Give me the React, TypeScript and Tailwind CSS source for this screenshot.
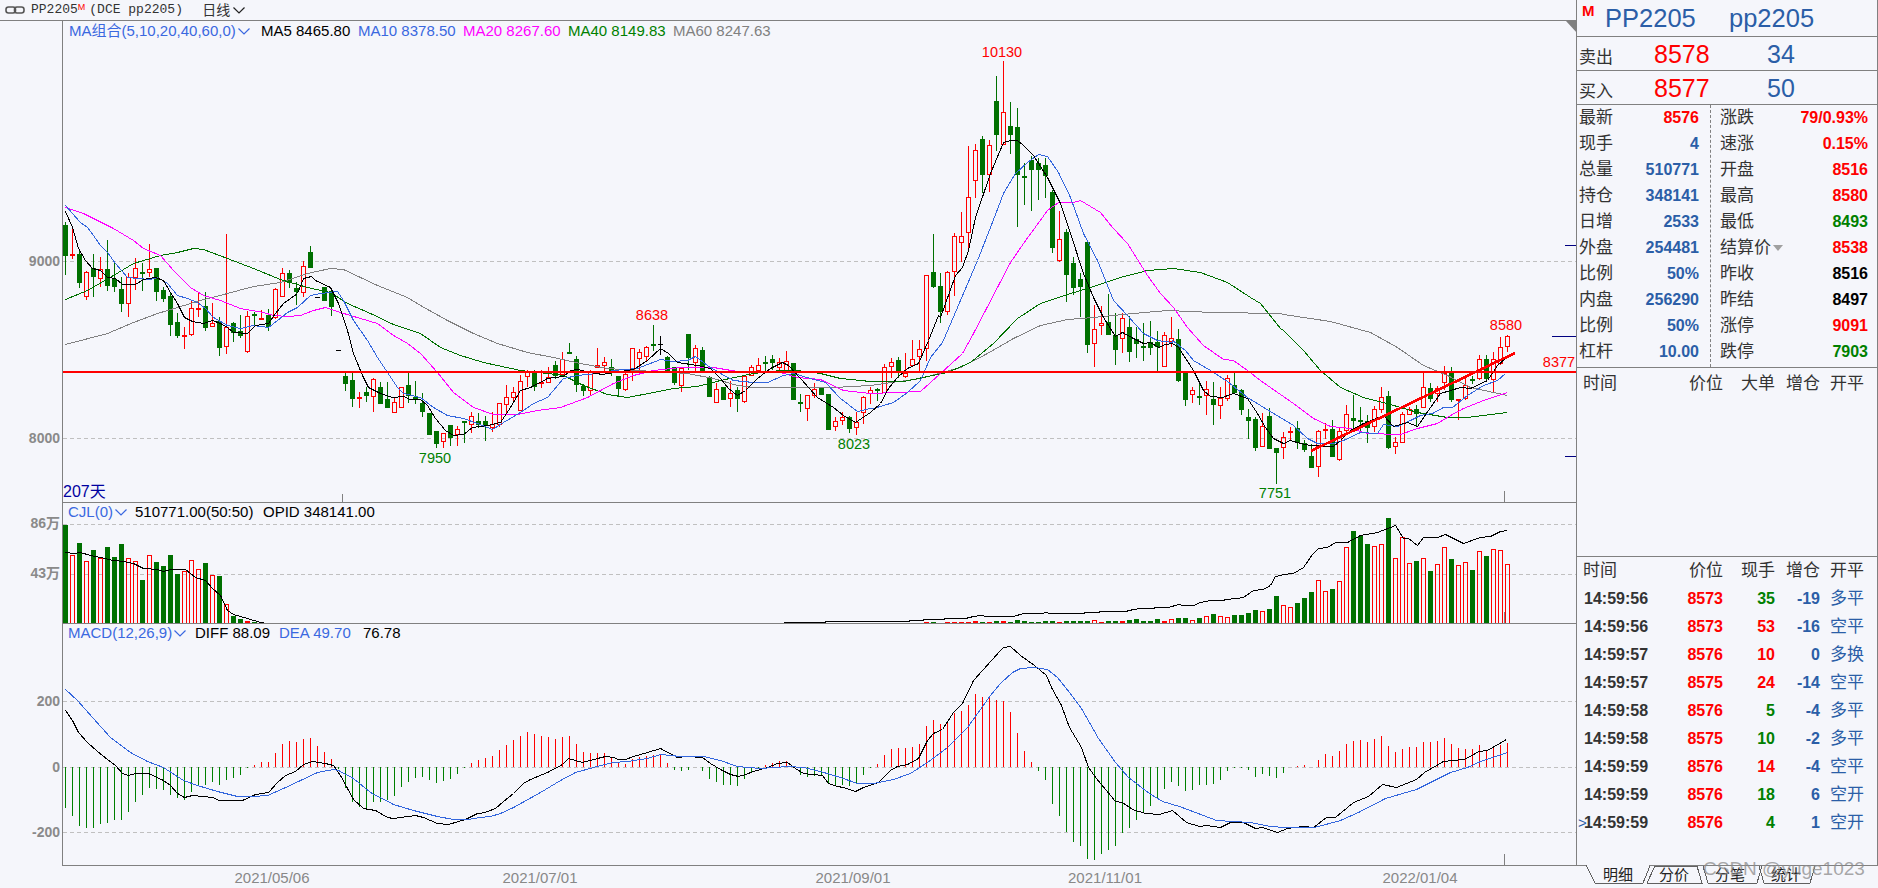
import React from 'react';

type Kind = 'r' | 'g' | 'k';
type Row = [Kind, number, number, number, number];
type Candle = { k: Kind; wt: number; bt: number; bb: number; wb: number };

const RED = '#ff0000';
const GREEN = '#007000';
const BLUE = '#3a68e0';
const GRID = '#c0c0c0';

// values below are read at 3x, so every list carries its own origin
const seg = (base: number, rows: Row[]): Candle[] =>
  rows.map(([k, a, b, c, d]) => ({
    k,
    wt: Math.round(base + a / 3),
    bt: Math.round(base + b / 3),
    bb: Math.round(base + c / 3),
    wb: Math.round(base + d / 3),
  }));

const candles: Candle[] = [
  ...seg(180, [
    ['g', 125, 135, 227, 285], ['r', 140, 222, 228, 237], ['g', 210, 222, 308, 325], ['r', 272, 277, 350, 360],
    ['g', 222, 265, 290, 350], ['r', 232, 268, 298, 322], ['g', 180, 267, 317, 332], ['g', 245, 296, 320, 335],
    ['g', 290, 327, 373, 395], ['r', 278, 292, 373, 410], ['r', 235, 265, 295, 330], ['g', 250, 276, 281, 332],
    ['r', 192, 268, 278, 290], ['g', 265, 265, 337, 362], ['g', 320, 330, 356, 365], ['g', 340, 348, 434, 467],
    ['g', 400, 427, 467, 475], ['r', 440, 466, 470, 506], ['r', 362, 385, 466, 467], ['r', 336, 385, 388, 410],
    ['g', 335, 378, 443, 452], ['r', 370, 430, 442, 442], ['g', 412, 424, 503, 527], ['r', 162, 442, 502, 522],
    ['g', 425, 430, 458, 485], ['g', 405, 453, 467, 473], ['r', 393, 409, 517, 518], ['g', 397, 402, 407, 440],
    ['r', 390, 415, 419, 420], ['g', 388, 404, 440, 452], ['r', 325, 328, 415, 418], ['r', 265, 280, 350, 350],
    ['g', 270, 280, 308, 325], ['g', 306, 325, 335, 375], ['r', 243, 259, 338, 350], ['g', 197, 216, 264, 264],
    ['k', 352, 352, 352, 352], ['g', 322, 322, 362, 362], ['g', 330, 333, 382, 408], ['k', 511, 511, 511, 511],
    ['g', 578, 588, 611, 632], ['g', 575, 600, 656, 680], ['r', 636, 650, 658, 683], ['g', 620, 636, 648, 665],
    ['r', 595, 598, 650, 695], ['g', 605, 621, 672, 672], ['g', 605, 657, 684, 684], ['r', 650, 667, 700, 700],
    ['r', 620, 622, 683, 683], ['g', 578, 615, 647, 670], ['g', 603, 650, 655, 672],
  ]),
  ...seg(290, [
    ['g', 310, 340, 365, 380], ['g', 368, 368, 435, 435], ['g', 423, 423, 462, 473], ['r', 428, 428, 455, 473],
    ['g', 405, 405, 445, 467], ['r', 408, 418, 435, 467], ['g', 392, 393, 400, 458], ['r', 365, 379, 406, 428],
    ['g', 370, 393, 406, 415], ['g', 378, 393, 407, 452], ['r', 365, 403, 415, 425], ['r', 338, 340, 405, 412],
    ['r', 285, 322, 346, 370], ['r', 290, 307, 325, 340], ['r', 255, 272, 362, 362], ['r', 240, 245, 260, 290],
    ['g', 240, 248, 290, 302], ['r', 240, 275, 280, 295], ['r', 232, 262, 278, 278], ['g', 213, 226, 258, 268],
    ['r', 187, 208, 255, 260], ['g', 160, 187, 191, 192], ['g', 198, 208, 285, 305], ['g', 282, 288, 302, 318],
    ['r', 240, 242, 302, 318], ['r', 175, 225, 233, 235], ['r', 202, 217, 227, 250], ['g', 208, 230, 245, 258],
    ['g', 258, 258, 296, 318], ['r', 240, 253, 300, 302], ['r', 175, 175, 245, 272], ['r', 178, 187, 208, 248],
    ['r', 168, 172, 202, 215], ['g', 105, 162, 167, 182], ['k', 138, 163, 163, 195], ['g', 198, 202, 250, 250],
    ['g', 232, 232, 278, 285], ['r', 235, 235, 288, 305], ['g', 133, 133, 205, 240], ['r', 165, 175, 220, 245],
    ['g', 170, 180, 250, 250], ['g', 258, 260, 320, 322], ['r', 278, 298, 338, 338], ['g', 290, 292, 330, 330],
    ['r', 272, 310, 328, 350], ['g', 290, 300, 326, 365], ['r', 256, 257, 335, 340], ['r', 225, 232, 257, 258],
    ['r', 205, 224, 242, 245], ['g', 198, 216, 220, 250], ['g', 195, 207, 218, 240], ['r', 203, 215, 233, 240],
    ['r', 183, 212, 250, 250], ['g', 220, 220, 330, 330], ['g', 312, 337, 341, 365], ['r', 315, 316, 358, 392],
    ['r', 278, 298, 317, 325], ['g', 292, 292, 315, 315], ['g', 312, 312, 420, 420], ['r', 382, 394, 411, 422],
    ['r', 365, 382, 393, 405], ['g', 378, 380, 417, 430], ['r', 367, 397, 415, 435], ['r', 318, 322, 368, 402],
    ['r', 290, 300, 313, 342], ['g', 295, 297, 303, 333], ['r', 222, 232, 310, 310], ['r', 205, 217, 230, 265],
    ['g', 202, 210, 250, 265], ['r', 190, 248, 260, 265], ['r', 150, 208, 229, 232], ['r', 150, 178, 200, 243],
  ]),
  ...seg(30, [
    ['r', 735, 736, 958, 993], ['g', 612, 727, 770, 775], ['g', 730, 768, 845, 878], ['r', 722, 727, 845, 855],
    ['r', 610, 619, 727, 798], ['r', 545, 619, 640, 695], ['r', 348, 502, 610, 655], ['r', 342, 361, 454, 503],
    ['g', 318, 327, 434, 490], ['r', 330, 346, 434, 485], ['g', 138, 213, 314, 362], ['r', 93, 247, 344, 345],
    ['g', 216, 288, 314, 372], ['g', 234, 291, 434, 590], ['g', 400, 438, 443, 525], ['g', 378, 390, 419, 542],
    ['g', 385, 400, 419, 510], ['g', 385, 405, 437, 505], ['g', 480, 486, 653, 668], ['r', 543, 628, 694, 695],
    ['g', 598, 606, 734, 815], ['g', 680, 699, 773, 795], ['g', 730, 747, 771, 860], ['g', 636, 636, 944, 968],
    ['r', 826, 898, 943, 1011], ['r', 828, 880, 889, 915], ['g', 792, 876, 914, 914],
  ]),
  ...seg(290, [
    ['g', 70, 135, 180, 225], ['r', 68, 85, 148, 188], ['g', 78, 110, 185, 215], ['g', 110, 147, 162, 205],
    ['g', 98, 168, 172, 212], ['g', 92, 155, 173, 195], ['g', 122, 155, 172, 250], ['r', 125, 136, 230, 230],
    ['r', 80, 143, 156, 172], ['g', 118, 147, 272, 275], ['g', 248, 248, 329, 348], ['r', 290, 301, 314, 340],
    ['g', 272, 319, 323, 345], ['r', 272, 296, 317, 375], ['g', 275, 327, 345, 405], ['r', 292, 325, 349, 387],
    ['r', 255, 265, 326, 332], ['g', 245, 285, 310, 310], ['g', 298, 300, 360, 375], ['g', 357, 382, 392, 447],
    ['g', 380, 388, 473, 482], ['r', 368, 408, 472, 472], ['g', 353, 378, 476, 476],
  ]),
  ...seg(300, [
    ['g', 445, 445, 460, 552], ['r', 395, 412, 445, 477], ['r', 382, 394, 399, 420], ['g', 363, 385, 428, 448],
    ['g', 420, 430, 450, 455], ['g', 432, 468, 503, 505], ['r', 390, 394, 502, 530], ['r', 368, 388, 394, 416],
    ['g', 360, 388, 470, 470], ['r', 380, 394, 481, 482], ['r', 316, 343, 393, 400], ['g', 285, 354, 362, 390],
    ['g', 320, 360, 366, 395], ['g', 345, 363, 383, 428], ['r', 318, 328, 382, 395], ['r', 262, 292, 329, 340],
    ['g', 272, 288, 443, 448], ['r', 412, 427, 442, 462], ['r', 335, 343, 428, 430], ['r', 320, 328, 344, 345],
    ['g', 315, 327, 342, 380], ['r', 218, 262, 323, 325], ['g', 250, 264, 296, 305], ['r', 258, 265, 283, 305],
    ['r', 198, 218, 250, 270], ['g', 200, 217, 300, 305], ['r', 298, 298, 303, 360], ['r', 225, 255, 296, 300],
    ['g', 228, 237, 242, 252], ['r', 165, 178, 238, 240], ['g', 165, 178, 237, 240], ['r', 157, 178, 241, 278],
    ['r', 112, 142, 192, 195], ['r', 105, 108, 142, 155],
  ]),
];

const scale = (base: number, list: number[]) => list.map((v) => Math.round(base + v / 3));

const volumes: number[] = [
  ...scale(480, [
    135, 226, 190, 244, 210, 235, 201, 231, 192, 235, 244, 300, 226, 246, 258, 225, 282, 273, 241, 268, 250, 286, 288,
    373, 408, 417, 424, 426,
  ]),
  ...new Array(95).fill(623),
  ...scale(540, [
    246, 246, 249, 246, 246, 246, 246, 243, 246, 246, 243, 243, 246, 240, 243, 246, 246, 243, 243, 246, 243, 243, 243,
    243, 240, 246, 243, 243, 243, 240, 237, 243, 243, 237, 243, 237, 234, 234, 240, 234, 229, 222, 228, 231, 225, 225,
    219, 210, 213, 207,
  ]),
  ...scale(300, [
    888, 915, 921, 909, 894, 876, 841, 874, 867, 844, 742, 693, 708, 732, 738, 733, 655, 775, 712, 790, 783, 775, 813,
    793, 742, 777, 796, 787, 810, 754, 768, 748, 751, 793,
  ]),
];

const macd: number[] = [
  ...scale(480, [
    985, 1007, 1037, 1043, 1043, 1032, 1028, 1020, 1020, 995, 965, 945, 925, 928, 930, 945, 955, 960, 935, 918, 915, 905,
    915, 900, 893, 885, 865, 855, 847, 847, 820, 792, 783, 785, 777, 773, 798, 815, 837, 868, 925, 965, 980, 985, 965,
    965, 960, 947, 920, 905, 893, 890, 900, 908, 902, 896, 882, 863, 850, 840,
  ]),
  ...scale(630, [
    384, 378, 360, 345, 330, 318, 306, 312, 318, 321, 327, 321, 318, 342, 366, 369, 369, 369, 380, 398, 402, 388, 382,
    378, 375, 375, 399, 420, 422, 419, 410, 423, 447, 456, 465, 465, 468, 447, 430, 418, 405, 399, 393, 393, 412, 435,
    441, 438, 438, 462, 465, 465, 468, 462, 436, 413, 402, 375, 357, 354, 354, 351, 342, 288, 270, 282, 276, 249, 243,
    225, 192, 201, 204, 210,
    213, 246, 309, 363, 396, 422, 450, 521, 557, 606, 635, 647, 686, 689, 671, 659, 647, 608, 593, 569, 547, 527, 503,
    476, 455, 467, 482, 479, 464, 464, 461, 449, 422, 414, 415, 419, 440, 431, 437, 443, 428, 412, 408, 405, 412, 390,
    372, 378, 363, 342, 333, 330, 336, 327, 318, 348, 366, 357, 351, 351, 336, 336, 333, 324, 342, 354, 357, 357, 345,
    360, 353, 345, 339,
  ]),
];

const at = (ox: number, oy: number, flat: number[], sx = 3) => {
  const out: string[] = [];
  for (let i = 0; i < flat.length; i += 2) {
    out.push(`${Math.round(ox + flat[i] / sx) + 0.5},${Math.round(oy + flat[i + 1] / 3) + 0.5}`);
  }
  return out.join(' ');
};

const ma5 = [
  at(0, 180, [196,92,216,140,235,205,255,240,276,265,300,270,322,290,345,295,365,313,405,313,428,298,465,290,490,300,510,335,530,370,553,410,575,422,610,430,635,420,660,428,680,440,700,455,740,458,765,435,805,428,825,400,850,370,890,340,910,295,932,288,945,300,990,322,1015,370,1040,450,1060,520,1085,585,1105,620,1140,640,1175,652,1210,648,1230,656]),
  at(420, 290, [0,327,20,345,45,385,75,420,100,435,130,432,155,410,200,405,240,395,270,350,300,300,330,290,380,265,430,258,450,240,470,238,510,245,545,252,600,242,640,238,680,210,720,175,745,190,770,215,830,225,870,235,900,265,925,295,950,315,975,300,1010,265,1050,235,1085,215,1105,225,1140,265,1190,320,1240,350,1270,375,1305,395,1350,365]),
  at(860, 290, [30,365,60,340,85,295,110,260,140,235,175,218,205,150,235,75]),
  at(850, 30, [270,860,315,735,335,710,355,660,375,560,420,430,460,335,480,330,500,330,520,345,548,375,590,440,630,520,660,610,700,730,730,800,760,860,795,918,815,905,850,925,880,938,900,935,925,950,945,942,965,940,985,950]),
  at(860, 290, [960,180,1000,240,1030,300,1050,318,1085,320,1120,308,1160,325,1190,370,1215,410,1240,445]),
  at(1250, 300, [100,428,120,420,150,430,180,435,250,437,270,420,300,390,340,370,400,345,430,378,470,365,500,378,540,320,570,280,630,260,660,265,710,240,740,195,765,175]),
].join(' ');

const ma10 = [
  at(0, 180, [196,75,215,100,240,127,260,140,280,165,300,195,322,215,345,250,380,290,410,295,450,297,470,292,500,310,530,345,560,355,590,365,615,385,640,410,680,435,720,445,760,435,805,440,830,420,860,395,890,380,930,345,960,338,1010,333,1030,360,1060,420,1100,480,1130,530,1160,575,1190,620,1210,640]),
  at(420, 290, [0,320,40,350,80,375,130,385,170,400,215,418,250,395,300,365,340,340,380,320,430,265,470,255,530,250,580,240,650,235,720,208,760,212,800,210,825,198,860,225,900,250,940,270,1000,275,1040,277,1090,255,1120,250,1170,265,1215,275,1260,325,1310,362,1350,355]),
  at(860, 290, [40,355,100,335,140,305,180,270,210,200,245,155,290,50]),
  at(850, 30, [380,690,420,590,460,490,495,430,530,395,565,373,590,378,625,425,660,500,700,610,740,690,790,810,830,855,880,910,920,930,965,935]),
  at(860, 290, [935,150,975,180,1000,210,1050,240,1100,272,1160,320,1200,345]),
  at(1250, 300, [130,375,170,415,200,430,250,430,280,420,330,395,380,398,400,372,440,378,480,360,510,345,545,340,580,322,605,322,650,285,700,255,740,240,765,218]),
].join(' ');

const ma20 = [
  at(0, 180, [196,82,250,100,340,145,400,180,430,205,480,225,520,270,570,320,610,345,660,360,720,385,790,395,820,405,860,408,900,405,940,390,975,380,1020,395,1080,415,1130,430,1180,465,1220,490]),
  at(420, 290, [0,190,50,245,100,305,160,350,220,372,290,372,350,360,420,350,500,320,580,280,640,255,700,240,780,232,880,232,950,243,1000,243,1080,245,1130,262,1200,268,1270,300,1350,308]),
  at(860, 290, [180,303,240,250,305,190,340,130]),
  at(850, 30, [480,695,520,640,590,540,625,515,670,515,690,510,750,545,785,590,830,640,890,735,930,790,970,830,1010,890,1060,945]),
  at(860, 290, [1090,208,1120,210,1160,240,1200,270]),
  at(1250, 300, [50,255,130,310,190,355,240,378,300,385,350,400,450,402,500,385,560,370,600,345,640,325,700,300,770,277]),
].join(' ');

const ma40 = [
  at(0, 180, [196,358,260,330,340,285,400,250,480,225,530,215,580,205,610,207,680,235,760,265,840,297,920,322,990,335,1040,370,1110,400,1180,432]),
  at(420, 290, [0,130,60,170,120,195,190,215,300,240,380,250,430,255,490,285,560,312,620,320,700,305,760,295,830,287,900,270,1000,250,1080,240,1130,240,1200,250,1260,265,1350,272]),
  at(860, 290, [130,272,260,245,330,215,400,160,470,85,540,40,620,12]),
  at(850, 30, [720,770,810,740,890,720,970,715,1050,725,1130,755,1200,800]),
  at(860, 290, [1200,40,1260,115]),
  at(1250, 300, [100,90,160,150,210,210,270,260,340,290,420,312,500,335,590,350,650,350,770,337]),
].join(' ');

const ma60 = [
  at(0, 180, [196,492,320,458,400,425,470,398,530,380,600,360,680,340,760,318,840,305,920,278,990,265,1030,268,1130,315,1220,352]),
  at(420, 290, [0,45,80,90,160,130,230,160,320,185,400,200,480,218,560,235,700,243,800,250,880,265,950,285,1000,292,1110,290,1240,292,1350,285]),
  at(860, 290, [180,265,300,232,380,190,460,145,540,105,620,88,700,80,820,68,920,60,1060,65,1260,70]),
  at(1250, 300, [100,42,240,62,360,95,440,140,520,195,590,225,660,260,770,285]),
].join(' ');

const volMaLeft = at(0, 480, [196,215,220,220,240,215,270,225,300,232,340,240,370,242,400,250,430,265,470,268,490,272,510,268,555,268,585,292,615,300,635,325,660,345,680,390,700,402,740,415,780,425,800,428,920,428]);
const volMaRight = [
  at(760, 540, [70,247,195,247,195,244,445,244,450,241,490,241,490,238,550,238,555,235,615,235,640,229,660,226,680,229,760,229,790,220,845,220,855,217,870,220,970,220,975,217,1015,217,1020,214,1095,214,1120,208,1140,205,1180,205,1185,202,1225,202,1255,193,1270,196,1300,196,1320,187,1350,181,1390,181,1395,178,1430,175,1450,170,1480,150,1510,148,1530,135,1545,108,1560,106]),
  at(1250, 300, [100,822,130,820,160,800,185,762,205,745,230,740,255,725,290,727,330,705,380,695,435,675,458,713,475,715,500,735,520,710,560,712,585,703,640,730,690,710,720,707,750,693,770,690]),
].join(' ');

const diff = [
  at(0, 480, [196,690,215,720,235,755,260,785,290,813,320,837,345,855,365,878,385,884,405,880,445,880,490,900,510,915,530,938,553,950,575,946,605,947,640,952,655,961,725,961,765,943,805,935,830,905,855,885,885,872,910,852,935,842,975,850,1000,855,1020,885,1040,925,1060,957,1090,985,1125,990,1160,1010,1180,1015,1245,1006,1270,1012,1310,1030,1345,1033,1395,1018,1430,1000]),
  at(480, 630, [0,548,20,543,45,535,70,512,100,490,130,460,150,448,200,425,245,402,265,385,305,395,350,385,375,378,398,380,415,388,435,388,460,378,500,365,540,355,590,382,620,378,665,380,690,400,720,418,750,433,775,437,795,433,820,422,860,410,890,400,920,397,945,415,970,430,1025,436,1045,458,1070,467,1090,470,1125,482,1150,470,1195,455,1230,420,1250,408,1280,402,1315,385,1340,330,1360,310,1385,298,1420,245,1445,220,1480,150]),
  at(1000, 630, [0,60,10,52,30,48,60,75,100,105,135,135,150,170,180,225,205,290,240,350,260,410,285,445,340,512,360,516,390,538,430,548,470,553,510,541,550,575,590,588,610,586,650,592,680,577,720,576,755,595,775,592,820,607,850,595,895,587,925,590,965,562,990,562,1045,515,1090,497,1130,463,1170,472,1230,447,1255,425,1310,392,1370,387,1390,378,1415,362,1440,360,1498,327], 2.958),
].join(' ');

const dea = [
  at(0, 480, [196,628,230,660,275,712,330,770,390,815,440,842,490,862,550,900,590,915,650,932,710,948,755,948,800,945,850,925,900,900,950,875,1000,868,1015,870,1060,895,1110,935,1180,973,1240,990,1310,1007,1360,1018,1400,1018,1440,1012]),
  at(480, 630, [0,562,30,558,60,550,100,530,180,487,240,450,285,425,340,410,395,397,440,393,500,383,540,373,600,378,670,377,720,390,770,408,840,415,920,409,970,412,1020,422,1080,440,1130,458,1180,460,1240,447,1290,428,1340,395,1400,350,1460,290,1530,195]),
  at(1000, 630, [0,160,35,127,60,115,100,110,140,117,170,140,205,185,240,235,290,325,340,395,380,440,440,490,480,512,530,527,600,555,640,570,740,575,800,587,840,592,930,590,1005,570,1060,545,1140,503,1230,477,1330,425,1380,412,1420,393,1500,365], 2.958),
].join(' ');

const xOf = (i: number) => 65 + 7 * i;

const CandleMark = ({ c, i }: { c: Candle; i: number }) => {
  const x = xOf(i);
  const mid = x + 0.5;
  if (c.k === 'k') {
    return (
      <g stroke="#000">
        <line x1={x - 2} x2={x + 3} y1={c.bt + 0.5} y2={c.bt + 0.5} />
        {c.wb > c.wt && <line x1={mid} x2={mid} y1={c.wt} y2={c.wb} />}
      </g>
    );
  }
  const h = c.bb - c.bt;
  if (c.k === 'g') {
    return (
      <g>
        <rect x={x} y={c.wt} width={1} height={c.wb - c.wt} fill={GREEN} />
        <rect x={x - 2} y={c.bt} width={5} height={Math.max(h, 2)} fill={GREEN} />
      </g>
    );
  }
  return (
    <g>
      <rect x={x} y={c.wt} width={1} height={Math.max(c.bt - c.wt, 0)} fill={RED} />
      <rect x={x} y={c.bb} width={1} height={Math.max(c.wb - c.bb, 0)} fill={RED} />
      {h <= 2 ? (
        <rect x={x - 2} y={c.bt} width={5} height={2} fill={RED} />
      ) : (
        <rect x={x - 1.5} y={c.bt + 0.5} width={4} height={h - 1} fill="none" stroke={RED} />
      )}
    </g>
  );
};

const Chevron = ({ color = BLUE }: { color?: string }) => (
  <svg width="12" height="7" viewBox="0 0 12 7" className="shrink-0">
    <path d="M0.5 0.5 L6 6 L11.5 0.5" fill="none" stroke={color} strokeWidth="1.2" />
  </svg>
);

const Dashed = ({ y }: { y: number }) => (
  <line x1={63} x2={1576} y1={y + 0.5} y2={y + 0.5} stroke={GRID} strokeDasharray="4 3" />
);

const AxisLabel = ({ y, children }: { y: number; children: React.ReactNode }) => (
  <div
    className="absolute right-[2px] text-[14px] leading-[16px] font-bold text-[#8a8a8a]"
    style={{ top: y - 8 - 21 }}
  >
    {children}
  </div>
);

const Mark = ({ x, y, color, children }: { x: number; y: number; color: string; children: React.ReactNode }) => (
  <text x={x} y={y + 5} textAnchor="middle" fontSize="14.5" fill={color}>
    {children}
  </text>
);

const MainPanel = () => (
  <div className="relative h-[482px] border-b border-[#808080]">
    <div className="absolute left-[6px] top-[1px] flex h-[18px] items-center text-[15px] whitespace-nowrap">
      <div className="flex w-[192px] items-center gap-[2px] text-[#3a68e0]">
        <span>MA组合(5,10,20,40,60,0)</span>
        <Chevron />
      </div>
      <span className="w-[97px] text-black">MA5 8465.80</span>
      <span className="w-[105px] text-[#3a68e0]">MA10 8378.50</span>
      <span className="w-[105px] text-[#ff00ff]">MA20 8267.60</span>
      <span className="w-[105px] text-[#008000]">MA40 8149.83</span>
      <span className="text-[#808080]">MA60 8247.63</span>
    </div>
    <svg width={1513} height={481} viewBox="63 21 1513 481" className="block" shapeRendering="crispEdges">
      <Dashed y={261} />
      <Dashed y={438} />
      {candles.map((c, i) => (
        <CandleMark key={i} c={c} i={i} />
      ))}
      <g fill="none" strokeWidth="1">
        <polyline points={ma60} stroke="#808080" />
        <polyline points={ma40} stroke="#007000" />
        <polyline points={ma20} stroke="#ff00ff" />
        <polyline points={ma10} stroke="#3366dd" />
        <polyline points={ma5} stroke="#000000" />
      </g>
      <rect x={63} y={371} width={1513} height={2} fill={RED} />
      <line x1={1311} y1={451} x2={1515} y2={353} stroke={RED} strokeWidth="2.6" />
      <g stroke="#000080">
        <line x1={1565} x2={1576} y1={245.5} y2={245.5} />
        <line x1={1552} x2={1576} y1={336.5} y2={336.5} />
        <line x1={1565} x2={1576} y1={456.5} y2={456.5} />
      </g>
      <line x1={342.5} x2={342.5} y1={494} y2={502} stroke="#808080" />
      <line x1={1504.5} x2={1504.5} y1={491} y2={502} stroke="#808080" />
      <g shapeRendering="auto">
        <Mark x={1002} y={52} color={RED}>10130</Mark>
        <Mark x={652} y={315} color={RED}>8638</Mark>
        <Mark x={435} y={458} color="#008000">7950</Mark>
        <Mark x={854} y={444} color="#008000">8023</Mark>
        <Mark x={1275} y={493} color="#008000">7751</Mark>
        <Mark x={1506} y={325} color={RED}>8580</Mark>
        <Mark x={1559} y={362} color={RED}>8377</Mark>
        <text x={63} y={497} fontSize="16" fill="#0000a0">207天</text>
      </g>
    </svg>
  </div>
);

const VolumePanel = () => (
  <div className="relative h-[121px] border-b border-[#808080]">
    <div className="absolute left-[5px] top-0 flex h-[18px] items-center text-[15px] whitespace-nowrap">
      <div className="flex w-[67px] items-center gap-[2px] text-[#3a68e0]">
        <span>CJL(0)</span>
        <Chevron />
      </div>
      <span className="w-[128px] text-black">510771.00(50:50)</span>
      <span className="text-black">OPID 348141.00</span>
    </div>
    <svg width={1513} height={120} viewBox="63 503 1513 120" className="block" shapeRendering="crispEdges">
      <Dashed y={524} />
      <Dashed y={574} />
      {volumes.map((top, i) => {
        const h = 623 - top;
        if (h <= 0) return null;
        const x = xOf(i);
        if (candles[i].k === 'r' && h > 2) {
          return <rect key={i} x={x - 1.5} y={top + 0.5} width={4} height={h - 0.5} fill="none" stroke={RED} />;
        }
        return <rect key={i} x={x - 2} y={top} width={5} height={h} fill={candles[i].k === 'r' ? RED : GREEN} />;
      })}
      <g fill="none" stroke="#000">
        <polyline points={volMaLeft} />
        <polyline points={volMaRight} />
      </g>
      <line x1={1504.5} x2={1504.5} y1={612} y2={623} stroke="#808080" />
    </svg>
  </div>
);

const MacdPanel = () => (
  <div className="relative h-[242px] border-b border-[#808080]">
    <div className="absolute left-[5px] top-0 flex h-[18px] items-center text-[15px] whitespace-nowrap">
      <div className="flex w-[127px] items-center gap-[2px] text-[#3a68e0]">
        <span>MACD(12,26,9)</span>
        <Chevron />
      </div>
      <span className="w-[84px] text-black">DIFF 88.09</span>
      <span className="w-[84px] text-[#3a68e0]">DEA 49.70</span>
      <span className="text-black">76.78</span>
    </div>
    <svg width={1513} height={241} viewBox="63 624 1513 241" className="block" shapeRendering="crispEdges">
      <Dashed y={701} />
      <Dashed y={767} />
      <Dashed y={832} />
      {macd.map((tip, i) => {
        const up = tip < 767;
        return (
          <rect
            key={i}
            x={xOf(i)}
            y={up ? tip : 767}
            width={1}
            height={Math.abs(tip - 767)}
            fill={up ? RED : '#008000'}
          />
        );
      })}
      <g fill="none">
        <polyline points={diff} stroke="#000" />
        <polyline points={dea} stroke="#3366dd" />
      </g>
      <line x1={1504.5} x2={1504.5} y1={854} y2={865} stroke="#808080" />
    </svg>
  </div>
);

const VALUE_BLUE = 'text-[#2b5ea7]';
const VALUE_RED = 'text-[#ff0000]';
const VALUE_GREEN = 'text-[#008000]';
const VALUE_BLACK = 'text-black';

const leftStats: [string, string, string][] = [
  ['最新', '8576', VALUE_RED],
  ['现手', '4', VALUE_BLUE],
  ['总量', '510771', VALUE_BLUE],
  ['持仓', '348141', VALUE_BLUE],
  ['日增', '2533', VALUE_BLUE],
  ['外盘', '254481', VALUE_BLUE],
  ['比例', '50%', VALUE_BLUE],
  ['内盘', '256290', VALUE_BLUE],
  ['比例', '50%', VALUE_BLUE],
  ['杠杆', '10.00', VALUE_BLUE],
];

const rightStats: [string, string, string][] = [
  ['涨跌', '79/0.93%', VALUE_RED],
  ['速涨', '0.15%', VALUE_RED],
  ['开盘', '8516', VALUE_RED],
  ['最高', '8580', VALUE_RED],
  ['最低', '8493', VALUE_GREEN],
  ['结算价', '8538', VALUE_RED],
  ['昨收', '8516', VALUE_BLACK],
  ['昨结', '8497', VALUE_BLACK],
  ['涨停', '9091', VALUE_RED],
  ['跌停', '7903', VALUE_GREEN],
];

const trades: [string, string, string, string, string, string][] = [
  ['14:59:56', '8573', '35', VALUE_GREEN, '-19', '多平'],
  ['14:59:56', '8573', '53', VALUE_RED, '-16', '空平'],
  ['14:59:57', '8576', '10', VALUE_RED, '0', '多换'],
  ['14:59:57', '8575', '24', VALUE_RED, '-14', '空平'],
  ['14:59:58', '8576', '5', VALUE_GREEN, '-4', '多平'],
  ['14:59:58', '8575', '10', VALUE_GREEN, '-2', '多平'],
  ['14:59:59', '8576', '14', VALUE_RED, '-4', '空平'],
  ['14:59:59', '8576', '18', VALUE_GREEN, '6', '空开'],
  ['14:59:59', '8576', '4', VALUE_GREEN, '1', '空开'],
];

const TABLE_COLS = 'grid grid-cols-[90px_56px_52px_45px_44px] items-center';

const TableHead = ({ third }: { third: string }) => (
  <div className={`${TABLE_COLS} h-[28px] text-[17px] text-[#333] text-right`}>
    <span className="pl-[6px] text-left">时间</span>
    <span>价位</span>
    <span>{third}</span>
    <span>增仓</span>
    <span>开平</span>
  </div>
);

const StatColumn = ({ rows, className }: { rows: [string, string, string][]; className: string }) => (
  <div className={className}>
    {rows.map(([label, value, tone]) => (
      <div key={label + value} className="flex h-[26px] items-center justify-between">
        <span className="relative text-[17px] text-[#333]">
          {label}
          {label === '结算价' && (
            <span className="absolute left-[53px] top-[10px] h-0 w-0 border-x-[5px] border-t-[6px] border-x-transparent border-t-[#a0a0a0]" />
          )}
        </span>
        <span className={`text-[16px] font-bold ${tone}`}>{value}</span>
      </div>
    ))}
  </div>
);

const QuotePanel = () => (
  <div className="flex h-full w-[302px] flex-col border-x border-b border-[#808080]">
    <div className="flex h-[37px] shrink-0 border-b border-[#808080]">
      <span className="mt-[2px] ml-[5px] w-[23px] text-[15px] leading-[18px] font-bold text-[#ff0000]">M</span>
      <span className="w-[124px] text-[25.5px] leading-[36px] text-[#2b5ea7]">PP2205</span>
      <span className="text-[25.5px] leading-[36px] text-[#2b5ea7]">pp2205</span>
    </div>
    {[
      ['卖出', '8578', '34'],
      ['买入', '8577', '50'],
    ].map(([side, price, lots]) => (
      <div key={side} className="flex h-[34px] shrink-0 items-center border-b border-[#808080]">
        <span className="mt-[8px] w-[77px] pl-[2px] text-[17px] text-[#333]">{side}</span>
        <span className="w-[113px] text-[25px] leading-[30px] text-[#ff0000]">{price}</span>
        <span className="text-[25px] leading-[30px] text-[#2b5ea7]">{lots}</span>
      </div>
    ))}
    <div className="flex h-[263px] shrink-0 border-b border-[#808080]">
      <StatColumn rows={leftStats} className="w-[134px] border-r border-dashed border-[#808080] pr-[11px] pl-[2px]" />
      <StatColumn rows={rightStats} className="w-[166px] pr-[9px] pl-[9px]" />
    </div>
    <div className="h-[189px] shrink-0 border-b border-[#808080] pt-[2px]">
      <TableHead third="大单" />
    </div>
    <TableHead third="现手" />
    {trades.map(([time, price, lots, tone, delta, kind], i) => (
      <div key={i} className={`${TABLE_COLS} relative h-[28px] text-right text-[16px] font-bold`}>
        {i === trades.length - 1 && (
          <span className="absolute left-[1px] top-[3px] text-[15px] font-normal text-[#2b5ea7]">&gt;</span>
        )}
        <span className="pl-[7px] text-left text-[#333]">{time}</span>
        <span className="text-[#ff0000]">{price}</span>
        <span className={tone}>{lots}</span>
        <span className="text-[#2b5ea7]">{delta}</span>
        <span className="text-[17px] font-normal text-[#2b5ea7]">{kind}</span>
      </div>
    ))}
  </div>
);

const dates: [number, string][] = [
  [272, '2021/05/06'],
  [540, '2021/07/01'],
  [853, '2021/09/01'],
  [1105, '2021/11/01'],
  [1420, '2022/01/04'],
];

const tabs: [string, string, number][] = [
  ['明细', '1586,865 1595,883 1643,883 1650,866', 1618],
  ['分价', '1647,883 1655,866 1697,866 1702,883 1647,883', 1674],
  ['分笔', '1703,866 1708,883 1757,883 1762,866', 1730],
  ['统计', '1759,866 1764,883 1810,883 1815,866', 1786],
];

const BottomBar = () => (
  <div className="relative h-[22px]">
    {dates.map(([x, label]) => (
      <span
        key={label}
        className="absolute top-[3px] -translate-x-1/2 text-[15px] leading-[18px] text-[#888]"
        style={{ left: x }}
      >
        {label}
      </span>
    ))}
    <svg
      width={320}
      height={23}
      viewBox="1558 865 320 23"
      className="absolute top-[-1px] left-[1558px]"
      shapeRendering="crispEdges"
    >
      <rect x={1587} y={865} width={62} height={1} fill="#f5f6fb" />
      {tabs.map(([label, points, x]) => (
        <g key={label}>
          <polyline points={points} fill="none" stroke="#606060" />
          <text x={x} y={880} textAnchor="middle" fontSize="15" fill="#222" shapeRendering="auto">
            {label}
          </text>
        </g>
      ))}
    </svg>
  </div>
);

export default function App() {
  return (
    <div className="relative h-[888px] w-[1878px] overflow-hidden bg-[#f5f6fb] font-['Liberation_Sans','Noto_Sans_CJK_SC',sans-serif]">
      <div className="flex h-[866px]">
        <div className="flex w-[1576px] flex-col">
          <div className="flex h-[21px] shrink-0 items-center border-b border-[#808080] pl-[5px]">
            <svg width="20" height="8" viewBox="0 0 20 8" className="shrink-0">
              <rect x="1" y="1" width="9.5" height="6" rx="2.5" fill="none" stroke="#555" strokeWidth="1.6" />
              <rect x="9.5" y="1" width="9.5" height="6" rx="2.5" fill="none" stroke="#555" strokeWidth="1.6" />
            </svg>
            <span className="ml-[6px] font-['Liberation_Mono',monospace] text-[13px] text-[#333]">PP2205</span>
            <span className="mb-[6px] text-[9px] leading-none text-[#ff0000]">M</span>
            <span className="ml-[4px] w-[113px] font-['Liberation_Mono',monospace] text-[13px] text-[#333] whitespace-nowrap">
              (DCE pp2205)
            </span>
            <span className="text-[14px] text-[#333]">日线</span>
            <span className="ml-[3px]">
              <Chevron color="#222" />
            </span>
          </div>
          <div className="flex flex-1">
            <div className="relative w-[63px] shrink-0 border-r border-[#808080]">
              <AxisLabel y={261}>9000</AxisLabel>
              <AxisLabel y={438}>8000</AxisLabel>
              <AxisLabel y={523}>86万</AxisLabel>
              <AxisLabel y={573}>43万</AxisLabel>
              <AxisLabel y={701}>200</AxisLabel>
              <AxisLabel y={767}>0</AxisLabel>
              <AxisLabel y={832}>-200</AxisLabel>
            </div>
            <div className="flex min-w-0 flex-1 flex-col">
              <MainPanel />
              <VolumePanel />
              <MacdPanel />
            </div>
          </div>
        </div>
        <QuotePanel />
      </div>
      <BottomBar />
      <svg width="11" height="12" viewBox="0 0 11 12" className="absolute top-[21px] left-[1566px]">
        <polygon points="0,0 11,0 11,12" fill="#808080" />
      </svg>
      <span className="absolute top-[858px] left-[1703px] text-[19px] leading-[22px] whitespace-nowrap text-[#8c8c8c]/75">
        CSDN @yuge1023
      </span>
    </div>
  );
}
